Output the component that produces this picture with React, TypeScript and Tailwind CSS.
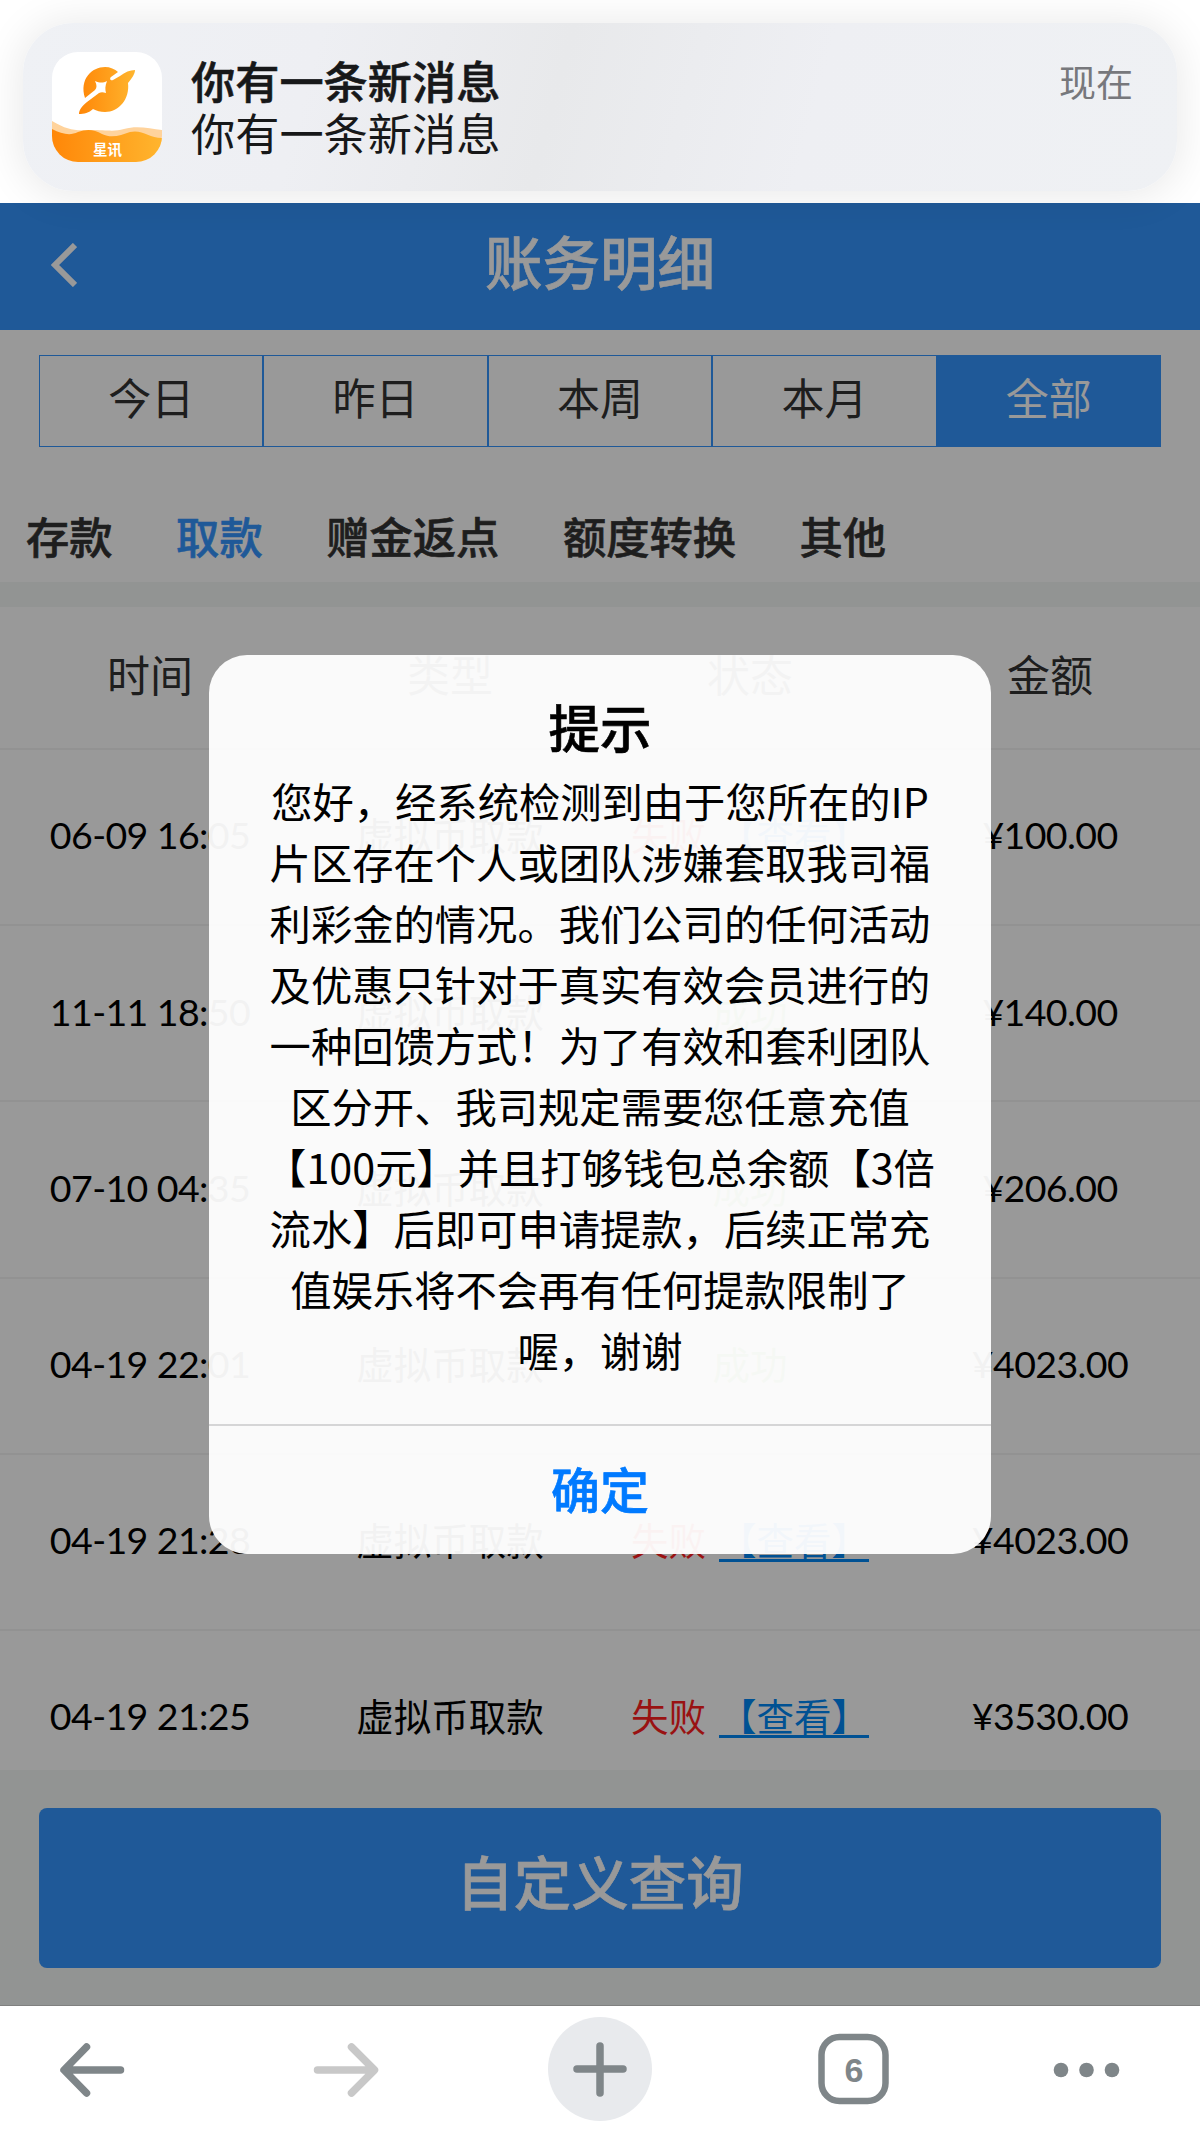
const ranges = ["今日", "昨日", "本周", "本月", "全部"];
const categories = ["存款", "取款", "赠金返点", "额度转换", "其他"];
const columns = ["时间", "类型", "状态", "金额"];

const records = [
  { time: "06-09 16:05", ok: false, amount: "¥100.00" },
  { time: "11-11 18:50", ok: true, amount: "¥140.00" },
  { time: "07-10 04:35", ok: true, amount: "¥206.00" },
  { time: "04-19 22:01", ok: true, amount: "¥4023.00" },
  { time: "04-19 21:28", ok: false, amount: "¥4023.00" },
  { time: "04-19 21:25", ok: false, amount: "¥3530.00" },
];

const message = [
  "您好，经系统检测到由于您所在的IP",
  "片区存在个人或团队涉嫌套取我司福",
  "利彩金的情况。我们公司的任何活动",
  "及优惠只针对于真实有效会员进行的",
  "一种回馈方式！为了有效和套利团队",
  "区分开、我司规定需要您任意充值",
  "【100元】并且打够钱包总余额【3倍",
  "流水】后即可申请提款，后续正常充",
  "值娱乐将不会再有任何提款限制了",
  "喔，谢谢",
];

const AppIcon = () => (
  <svg viewBox="0 0 110 110" className="w-[110px] h-[110px] rounded-[26px] shrink-0">
    <defs>
      <linearGradient id="orange" x1="0" x2="1" y1="0" y2="0">
        <stop offset="0" stopColor="#ff8708" />
        <stop offset="1" stopColor="#ffb52e" />
      </linearGradient>
    </defs>
    <rect width="110" height="110" fill="#fff" />
    <path
      d="M33 46C27 27 40 15 53 15C58 15 63 17 66 20L59 25C57 27 59 29 61 28L68 24C73 20 78 18 83 18C83 22 80 26 76 31C78 47 67 60 53 60C48 60 45 59 41 57C37 61 32 62 27 62C27 58 30 54 35 50L47 41C49 40 51 40 54 41C53 37 53 34 55 29C51 31 48 31 43 29C45 33 45 36 43 38Z"
      fill="url(#orange)"
    />
    <path
      d="M0 69C16 78 22 79 38 78C55 78 62 80 72 77C86 73 98 77 110 78V95H0Z"
      fill="#ffd39c"
    />
    <path
      d="M0 77C10 82 18 84 26 80C34 77 42 77 50 82C60 87 69 83 78 80C90 77 97 86 110 86V110H0Z"
      fill="url(#orange)"
    />
    <text x="55.5" y="103" textAnchor="middle" fontSize="14.5" fontWeight="700" fill="#fff">
      星讯
    </text>
  </svg>
);

const Notification = () => (
  <div className="relative z-10 h-[203px] shrink-0 bg-white px-[23px] pt-[23px]">
    <div className="h-[168px] rounded-[50px] flex pl-[29px] pr-[44px] bg-[linear-gradient(105deg,#eff1f5_0%,#eeeff3_25%,#e8e9eb_46%,#eeeff3_68%,#eff1f4_100%)] shadow-[0px_2px_40px_4px_rgba(0,0,0,0.085)]">
      <div className="pt-[29px]">
        <AppIcon />
      </div>
      <div className="ml-[29px] pt-[31px] text-[44.2px] leading-[52px] text-[#171819]">
        <div className="font-medium [-webkit-text-stroke:0.6px]">你有一条新消息</div>
        <div>你有一条新消息</div>
      </div>
      <div className="ml-auto pt-[32px] text-[37px] leading-[52px] text-[#77787c]">
        现在
      </div>
    </div>
  </div>
);

const Toolbar = () => (
  <div className="relative z-10 h-[129px] shrink-0 bg-white border-t border-[#808080]">
    <svg viewBox="0 0 1200 128" className="w-full h-[128px]" fill="none">
      {/* 后退 / 前进 */}
      <g strokeWidth="7.500" strokeLinecap="round" strokeLinejoin="round">
        <path d="M86.500 41L64 64L86.500 87M65 64H120.500" stroke="#7f8689" />
        <path d="M351.500 41L374.500 64L351.500 87M373 64H317.500" stroke="#c8c8c8" />
      </g>
      {/* 新标签页 */}
      <circle cx="600" cy="63" r="52" fill="#e8eaed" />
      <path d="M577 63H623M600 40V87" stroke="#7f8689" strokeWidth="7.500" strokeLinecap="round" />
      <rect x="821.500" y="31" width="64" height="64" rx="18" stroke="#7f8689" strokeWidth="6.500" />
      <text
        x="854"
        y="75.500"
        textAnchor="middle"
        fontSize="34"
        fontWeight="700"
        fill="#7f8689"
        className="font-['Liberation_Sans',sans-serif]"
      >
        6
      </text>
      <g fill="#7f8689">
        <circle cx="1061" cy="64" r="7.300" />
        <circle cx="1086.500" cy="64" r="7.300" />
        <circle cx="1112" cy="64" r="7.300" />
      </g>
    </svg>
  </div>
);

const Dialog = () => (
  <div className="absolute inset-x-0 top-[203px] bottom-[129px] bg-black/40">
    <div className="mx-auto mt-[452px] w-[782px] h-[899px] rounded-[38px] bg-white/95 flex flex-col text-center text-black">
      <div className="pt-[41px] text-[51.5px] leading-[60px] font-medium [-webkit-text-stroke:0.6px]">
        提示
      </div>
      <div className="mt-[14px] text-[41.3px] leading-[61px]">
        {message.map((line) => (
          <div key={line} className="flex justify-center whitespace-nowrap">
            {line}
          </div>
        ))}
      </div>
      <button className="mt-auto h-[130px] pb-[5px] border-t-2 border-[#d5d5d6] text-[49px] leading-[60px] font-medium text-[#007aff] [-webkit-text-stroke:0.6px]">
        确定
      </button>
    </div>
  </div>
);

export default function App() {
  return (
    <div className="relative w-[1200px] h-[2134px] flex flex-col overflow-hidden bg-white font-['Noto_Sans_CJK_SC',sans-serif]">
      <Notification />

      {/* 页面标题 */}
      <div className="h-[127px] shrink-0 bg-[#3494fd] flex items-center px-[51px] pb-[4px]">
        <svg viewBox="0 0 26 44" className="w-[26px] h-[44px]" fill="none">
          <path d="M24 2L4 22L24 42" stroke="#fff" strokeWidth="6" />
        </svg>
        <div className="flex-1 pr-[26px] pb-[9px] text-center text-[57.5px] leading-[80px] font-medium text-white [-webkit-text-stroke:0.6px]">
          账务明细
        </div>
      </div>

      {/* 时间范围 */}
      <div className="mt-[25px] mx-[39px] h-[92px] shrink-0 flex border border-[#3494fd]">
        {ranges.map((item) => (
          <div
            key={item}
            className={
              item === "全部"
                ? "flex-1 flex justify-center pt-[8px] text-[43px] leading-[64px] bg-[#3494fd] text-white"
                : "flex-1 flex justify-center pt-[8px] text-[43px] leading-[64px] text-[#333] border-r-2 border-[#3494fd]"
            }
          >
            {item}
          </div>
        ))}
      </div>

      <div className="h-[135px] shrink-0 flex gap-[63.5px] pl-[26px] pt-[56px] text-[43.3px] leading-[64px] font-medium text-[#333] [-webkit-text-stroke:0.6px]">
        {categories.map((item) => (
          <div key={item} className={item === "取款" ? "text-[#3494fd]" : ""}>
            {item}
          </div>
        ))}
      </div>
      <div className="h-[25px] shrink-0 bg-[#f3f7f5]" />

      {/* 明细列表 */}
      <div className="flex-1 min-h-0 overflow-hidden">
        <div className="h-[143px] grid grid-cols-4 items-center pb-[8px] border-b-2 border-[#f3f3f3] text-center text-[43px] text-[#333]">
          {columns.map((item) => (
            <div key={item}>{item}</div>
          ))}
        </div>
        {records.map((row) => (
          <div
            key={row.time}
            className="h-[176.2px] grid grid-cols-4 items-center pb-[3px] border-b-2 border-[#f3f3f3] text-center text-[37.5px] whitespace-nowrap text-black"
          >
            <div className="font-['Lato',sans-serif] tracking-[-0.6px]">{row.time}</div>
            <div className="pb-[2px]">虚拟币取款</div>
            {row.ok ? (
              <div className="pb-[2px] text-[#7ac143]">成功</div>
            ) : (
              <div className="pb-[2px] text-[#ff1f1f]">
                失败
                <span className="ml-[13px] text-[#0088f5] underline underline-offset-4">
                  【查看】
                </span>
              </div>
            )}
            <div className="font-['Lato',sans-serif] tracking-[-0.6px]">{row.amount}</div>
          </div>
        ))}
      </div>

      <div className="h-[235px] shrink-0 bg-[#f3f7f5] px-[39px] pt-[38px]">
        <button className="w-full h-[160px] pb-[15px] rounded-lg bg-[#3494fd] text-[57.5px] font-medium text-white [-webkit-text-stroke:0.6px]">
          自定义查询
        </button>
      </div>

      <Dialog />
      <Toolbar />
    </div>
  );
}
